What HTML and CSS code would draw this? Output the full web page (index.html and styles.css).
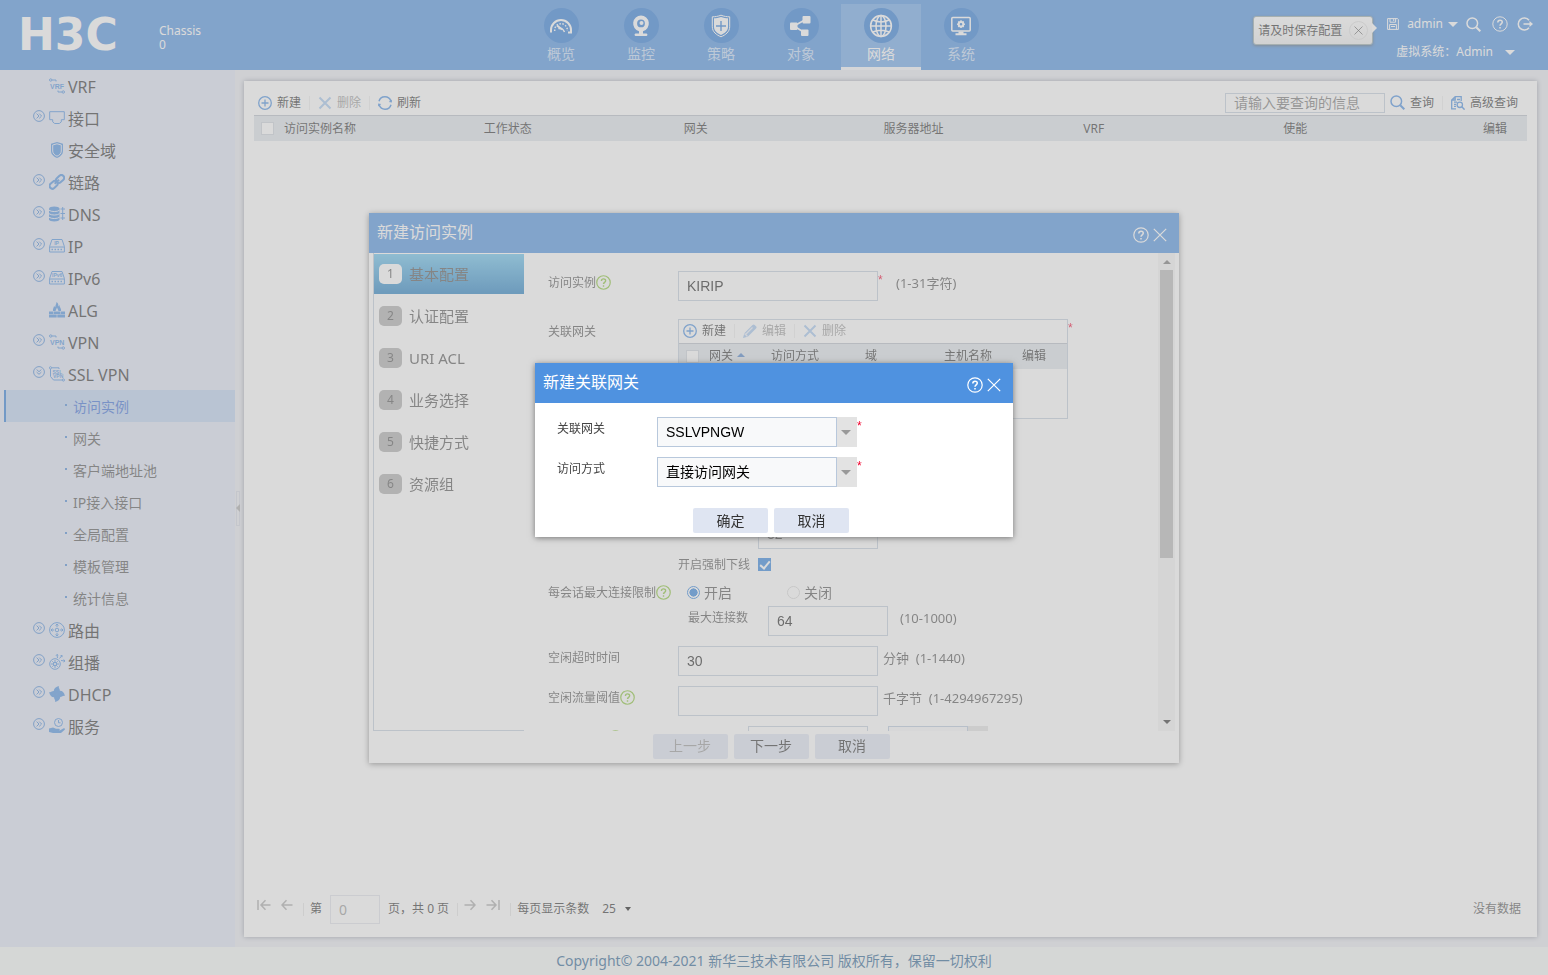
FILE: index.html
```html
<!DOCTYPE html>
<html lang="zh-CN">
<head>
<meta charset="utf-8">
<title>H3C</title>
<link rel="stylesheet" href="styles.css">
</head>
<body>
<svg class="sprite" aria-hidden="true">
  <symbol id="i-more" viewBox="0 0 12 12"><circle cx="6" cy="6" r="5.4"/><path d="M3.6 3.6 6 6 3.6 8.4M6.2 3.6 8.6 6 6.2 8.4"/></symbol>
  <symbol id="i-less" viewBox="0 0 12 12"><circle cx="6" cy="6" r="5.4"/><path d="M3.6 3.5 6 5.7 8.4 3.5M3.6 6.1 6 8.3 8.4 6.1"/></symbol>
  <symbol id="i-vrf" viewBox="0 0 16 16"><path d="M3 2h4v1.500M9 12.500V14h4"/><circle cx="1.7" cy="2" r="1.2"/><circle cx="14.3" cy="14" r="1.2"/><text x="1" y="10.6">VRF</text></symbol>
  <symbol id="i-vpn" viewBox="0 0 16 16"><path d="M3 2h4v1.500M9 12.500V14h4"/><circle cx="1.7" cy="2" r="1.2"/><circle cx="14.3" cy="14" r="1.2"/><text x="1" y="10.6">VPN</text></symbol>
  <symbol id="i-ssl" viewBox="0 0 16 16"><path d="M3 1.800h7v1.200M1.500 3v7.500l3 3.500h8.500"/><circle cx="1.500" cy="1.800" r="1.1"/><circle cx="14.400" cy="14" r="1.1"/><text class="tiny" x="3.500" y="7.500">SSL</text><text class="tiny" x="4" y="12.400">VPN</text></symbol>
  <symbol id="i-port" viewBox="0 0 16 16"><path d="M.7 1.700h14.600v8h-3v2.200l-2 1.600H5.700l-2-1.600V9.700h-3z"/></symbol>
  <symbol id="i-shield" viewBox="0 0 16 16"><path class="solid" d="M8 0 14 1.800V9c0 3.500-3 5.800-6 7-3-1.200-6-3.500-6-7V1.800z"/><path class="cut" d="M8 1.800 12.300 3v6c0 2.500-2 4.200-4.300 5.200C5.700 13.200 3.700 11.500 3.700 9V3z"/></symbol>
  <symbol id="i-link" viewBox="0 0 16 16"><g transform="rotate(-42 8 8)" class="thick"><rect x="-.8" y="5" width="8.800" height="5.600" rx="2.800"/><rect x="8" y="5" width="8.800" height="5.600" rx="2.800"/><path d="M5 7.800h6"/></g></symbol>
  <symbol id="i-dns" viewBox="0 0 16 16"><path class="solid" d="M0 2.500C0-.2 10.500-.2 10.500 2.500v10.800c0 3-10.500 3-10.500 0z"/><path class="cut" d="M0 4.200c2 1.800 8.500 1.800 10.500 0M0 7.700c2 1.800 8.500 1.800 10.500 0M0 11.200c2 1.800 8.500 1.800 10.500 0"/><path d="M11.500 3H16M11.500 7.500H16M11.500 12H16M13.700 1v13"/></symbol>
  <symbol id="i-ip" viewBox="0 0 16 16"><path d="M3 1.500h10l2.400 7v5.500H.6V8.500zM.6 9h14.800"/><path class="dots" d="M2.500 11.500h11"/><text class="tiny" x="5.200" y="7.200">IP</text></symbol>
  <symbol id="i-ip6" viewBox="0 0 16 16"><path d="M3 1.500h10l2.400 7v5.500H.6V8.500zM.6 9h14.800"/><path class="dots" d="M2.500 11.500h11"/><text class="tiny" x="3" y="7.200">IPv6</text></symbol>
  <symbol id="i-alg" viewBox="0 0 16 16"><path class="solid" d="M0 9.500h4.500V12H0zM5 9.500h6V12H5zM11.500 9.500H16V12h-4.500zM0 12.600h7.700v3H0zM8.300 12.600H16v3H8.300zM4 9C3.500 6.500 5 5.500 5 4l1.300 1.200C6.300 3 7.500 2 7.500 0c2 1.300 2 3 1.700 4.500L10.500 3c0 2.500 2.200 3.500 1.500 6H9.500L8 5.500 6.500 9z"/></symbol>
  <symbol id="i-route" viewBox="0 0 16 16"><circle cx="8" cy="8" r="7.400"/><circle cx="8" cy="8" r="1.800"/><path d="M8 2v3M6.600 3.500 8 2l1.400 1.500M8 14v-3M6.600 12.500 8 14l1.400-1.500M2 8h3M3.500 6.600 2 8l1.500 1.400M14 8h-3M12.500 6.600 14 8l-1.500 1.400"/></symbol>
  <symbol id="i-cast" viewBox="0 0 16 16"><circle cx="6" cy="10" r="5.300"/><circle cx="6" cy="10" r="1.600"/><path d="M6 6v2.400M6 11.600V14M2 10h2.400M7.600 10H10M3.300 7.300l1.500 1.500M7.200 11.200l1.500 1.500M8.700 7.300 7.200 8.800M4.800 11.200l-1.500 1.500M8.500 4 8 .5M10.500 4.500 13 1.500M12 6.500l4 .500M7 1.700 8 .5l1.300 1M11.500 1.700 13 1.500v1.700M14.700 5.500 16 7l-1.500 1"/></symbol>
  <symbol id="i-dhcp" viewBox="0 0 16 16"><g class="solid"><path d="M7.800 8C3.500 7 3.500 1.500 10 0c-1 2 1.500 3 .800 5.500C10.300 7.300 9 8 7.800 8z"/><path transform="rotate(90 8 8)" d="M7.800 8C3.500 7 3.500 1.500 10 0c-1 2 1.500 3 .800 5.500C10.300 7.300 9 8 7.800 8z"/><path transform="rotate(180 8 8)" d="M7.800 8C3.500 7 3.500 1.500 10 0c-1 2 1.500 3 .800 5.500C10.300 7.300 9 8 7.800 8z"/><path transform="rotate(270 8 8)" d="M7.800 8C3.500 7 3.500 1.500 10 0c-1 2 1.500 3 .800 5.500C10.300 7.300 9 8 7.800 8z"/></g></symbol>
  <symbol id="i-serve" viewBox="0 0 16 16"><circle cx="9.500" cy="4.500" r="4"/><path d="M9.500 2v2.800h2"/><path class="solid" d="M0 10.500 4 9.500l3 1.300h3c1 .2 1 1.500 0 1.700H7.500h3.200l4-2.300c1-.3 1.700.7 1 1.500L12 15H4l-4-1z"/></symbol>

  <symbol id="i-plus" viewBox="0 0 14 14"><circle cx="7" cy="7" r="6.300"/><path d="M7 3.500v7M3.500 7h7"/></symbol>
  <symbol id="i-del" viewBox="0 0 14 14"><path class="bold" d="M1.500 1.500 12.500 12.500M12.500 1.500 1.500 12.500"/></symbol>
  <symbol id="i-refresh" viewBox="0 0 14 14"><path class="med" d="M1 5.300A6.200 6.200 0 0 1 12.800 5M13 8.700A6.200 6.200 0 0 1 1.200 9"/><path class="solid" d="M13.900 3.500v3l-3.200-.500zM.1 10.500v-3l3.200.500z"/></symbol>
  <symbol id="i-pen" viewBox="0 0 14 14"><path class="solid" d="m0 14 1.300-4.800L9.500 1c.8-.8 1.500-.8 2.200 0L13 2.300c.8.800.8 1.500 0 2.200L4.800 12.700z"/><path class="cut" d="m3 10 6.500-6.500M1.500 9.500l3 3"/></symbol>
  <symbol id="i-search" viewBox="0 0 15 15"><circle class="med" cx="6.300" cy="6.300" r="5.300"/><path class="bold" d="m10.300 10.300 4 4"/></symbol>
  <symbol id="i-adv" viewBox="0 0 14 14"><path d="M5 12.800H.7V4l3.500-3.300h6V5M.7 4h3.500V.7M3 6.200h3M3 8.300h2M3 10.400h2M6 3.500h3"/><circle cx="8.800" cy="8.800" r="2.700"/><path class="med" d="m10.800 10.800 2.800 2.800"/></symbol>
  <symbol id="i-help" viewBox="0 0 16 16"><circle cx="8" cy="8" r="7.200"/><path class="med" d="M5.800 6.400c0-3 4.500-2.900 4.500-.300C10.300 7.800 8 7.900 8 9.700M8 11v1.500"/></symbol>
  <symbol id="i-close" viewBox="0 0 14 14"><path d="M.8.800 13.200 13.200M13.200.8.8 13.200"/></symbol>
  <symbol id="i-save" viewBox="0 0 12 12"><path d="M.6.600h10l.8 1v9.800H.6zM3 .600v3.600h5.600V.600M6.700 1v2M2.600 11.400V6.500h6.800v4.900M4 8.500h4"/></symbol>
  <symbol id="i-exit" viewBox="0 0 16 14"><path class="med" d="M12 3.300A6 6 0 1 0 12 10.700M6.500 7h7"/><path class="solid" d="M12.500 4v6L16 7z"/></symbol>
  <symbol id="i-prev" viewBox="0 0 12 12"><path class="med" d="M11.500 6H1M5.500 1.200 1 6l4.500 4.800"/></symbol>
  <symbol id="i-first" viewBox="0 0 14 12"><path class="med" d="M1 1v10M13.500 6H4M8.500 1.200 4 6l4.500 4.800"/></symbol>

  <symbol id="n-gauge" viewBox="0 0 24 24"><path class="bold" d="M2 18.500V16a10 10 0 0 1 20 0v2.500h-3"/><path class="dots" d="M5.700 17v-1a6.300 6.300 0 0 1 12.600 0v1"/><path class="bold" d="m8 11.500 5 4"/><path class="med" d="M9.500 15c2-1.500 4.500-.500 6 3"/></symbol>
  <symbol id="n-cam" viewBox="0 0 24 24"><path class="solid" fill-rule="evenodd" d="M12 1.500a8 8 0 0 1 2 15.700v2.300h3.500a1.300 1.300 0 0 1 0 2.500h-11a1.300 1.300 0 0 1 0-2.500H10v-2.300A8 8 0 0 1 12 1.500zm0 4a3.900 3.900 0 1 0 0 7.800 3.900 3.900 0 0 0 0-7.800z"/><circle class="solid" cx="12.500" cy="9" r="2"/></symbol>
  <symbol id="n-policy" viewBox="0 0 24 24"><path d="M12 1.200c3 1.200 6 1.600 8.700 1.600v10c0 5-4.200 8.200-8.700 10-4.500-1.800-8.700-5-8.700-10v-10c2.700 0 5.700-.4 8.700-1.600z"/><path class="solid" fill-rule="evenodd" d="M12 3c2.500 1 4.800 1.300 7 1.300v8.500c0 4-3.300 6.500-7 8.200-3.700-1.700-7-4.200-7-8.200V4.300C7.200 4.300 9.500 4 12 3zM11.300 7v4.300H7v1.400h4.300V17h1.400v-4.300H17v-1.400h-4.300V7z"/></symbol>
  <symbol id="n-obj" viewBox="0 0 24 24"><path class="med" d="M5 12 17.500 5M5 12l11 7"/><rect class="solid" x="1" y="8.500" width="7.500" height="7.500" rx="1"/><rect class="solid" x="13.500" y="2" width="8" height="7.500" rx="1"/><rect class="solid" x="12" y="15.500" width="7.500" height="6.500" rx="1"/></symbol>
  <symbol id="n-net" viewBox="0 0 24 24"><g class="med"><circle cx="12" cy="12" r="10.400"/><ellipse cx="12" cy="12" rx="5" ry="10.400"/><path d="M1.600 12h20.800M12 1.600v20.800M4 6c4.500 2.500 11.500 2.500 16 0M4 18c4.500-2.500 11.500-2.500 16 0"/></g></symbol>
  <symbol id="n-sys" viewBox="0 0 24 24"><rect class="med" x="2.800" y="3.500" width="18.400" height="13.500" rx="1"/><path class="solid" d="M9.500 17.500h5v1.800h3v2h-11v-2h3z"/><circle class="bold" cx="12" cy="10.200" r="2.300"/><path class="med" d="M12 6.300v1.500M12 12.600v1.500M8.100 10.200h1.500M14.400 10.200h1.500M9.300 7.500l1 1M13.700 11.900l1 1M14.700 7.500l-1 1M10.300 11.900l-1 1"/></symbol>
</svg>

<header class="topbar">
  <div class="brand">
    <span class="logo">H3C</span>
    <span class="chassis">Chassis<br>0</span>
  </div>
  <nav class="mainnav">
    <a href="#"><span class="disc"><svg><use href="#n-gauge"/></svg></span>概览</a>
    <a href="#"><span class="disc"><svg><use href="#n-cam"/></svg></span>监控</a>
    <a href="#"><span class="disc"><svg><use href="#n-policy"/></svg></span>策略</a>
    <a href="#"><span class="disc"><svg><use href="#n-obj"/></svg></span>对象</a>
    <a href="#" class="current" aria-current="page"><span class="disc"><svg><use href="#n-net"/></svg></span>网络</a>
    <a href="#"><span class="disc"><svg><use href="#n-sys"/></svg></span>系统</a>
  </nav>
  <div class="tools">
    <div class="tools-row">
      <div class="tip">请及时保存配置<button type="button" class="tip-close" aria-label="关闭提示"><svg><use href="#i-close"/></svg></button></div>
      <button type="button" class="plain" aria-label="保存"><svg class="s12"><use href="#i-save"/></svg></button>
      <button type="button" class="plain user">admin<i class="caret"></i></button>
      <button type="button" class="plain" aria-label="搜索"><svg class="s15"><use href="#i-search"/></svg></button>
      <button type="button" class="plain helpbtn" aria-label="帮助"><svg class="s16"><use href="#i-help"/></svg></button>
      <button type="button" class="plain" aria-label="退出"><svg class="s16"><use href="#i-exit"/></svg></button>
    </div>
    <button type="button" class="plain vsys">虚拟系统：Admin<i class="caret"></i></button>
  </div>
</header>

<div class="workspace">
  <aside class="sidebar">
    <ul class="menu">
      <li><a href="#"><svg class="kind"><use href="#i-vrf"/></svg>VRF</a></li>
      <li><a href="#"><svg class="fold"><use href="#i-more"/></svg><svg class="kind"><use href="#i-port"/></svg>接口</a></li>
      <li><a href="#"><svg class="kind"><use href="#i-shield"/></svg>安全域</a></li>
      <li><a href="#"><svg class="fold"><use href="#i-more"/></svg><svg class="kind"><use href="#i-link"/></svg>链路</a></li>
      <li><a href="#"><svg class="fold"><use href="#i-more"/></svg><svg class="kind"><use href="#i-dns"/></svg>DNS</a></li>
      <li><a href="#"><svg class="fold"><use href="#i-more"/></svg><svg class="kind"><use href="#i-ip"/></svg>IP</a></li>
      <li><a href="#"><svg class="fold"><use href="#i-more"/></svg><svg class="kind"><use href="#i-ip6"/></svg>IPv6</a></li>
      <li><a href="#"><svg class="kind"><use href="#i-alg"/></svg>ALG</a></li>
      <li><a href="#"><svg class="fold"><use href="#i-more"/></svg><svg class="kind"><use href="#i-vpn"/></svg>VPN</a></li>
      <li><a href="#"><svg class="fold"><use href="#i-less"/></svg><svg class="kind"><use href="#i-ssl"/></svg>SSL VPN</a>
        <ul class="submenu">
          <li><a href="#" class="current">访问实例</a></li>
          <li><a href="#">网关</a></li>
          <li><a href="#">客户端地址池</a></li>
          <li><a href="#">IP接入接口</a></li>
          <li><a href="#">全局配置</a></li>
          <li><a href="#">模板管理</a></li>
          <li><a href="#">统计信息</a></li>
        </ul>
      </li>
      <li><a href="#"><svg class="fold"><use href="#i-more"/></svg><svg class="kind"><use href="#i-route"/></svg>路由</a></li>
      <li><a href="#"><svg class="fold"><use href="#i-more"/></svg><svg class="kind"><use href="#i-cast"/></svg>组播</a></li>
      <li><a href="#"><svg class="fold"><use href="#i-more"/></svg><svg class="kind"><use href="#i-dhcp"/></svg>DHCP</a></li>
      <li><a href="#"><svg class="fold"><use href="#i-more"/></svg><svg class="kind"><use href="#i-serve"/></svg>服务</a></li>
    </ul>
    <button type="button" class="collapse" aria-label="收起菜单"></button>
  </aside>

  <main class="panel">
    <div class="toolbar">
      <button type="button"><svg><use href="#i-plus"/></svg>新建</button>
      <button type="button" disabled><svg><use href="#i-del"/></svg>删除</button>
      <button type="button"><svg><use href="#i-refresh"/></svg>刷新</button>
      <div class="query">
        <input type="text" placeholder="请输入要查询的信息" aria-label="查询信息">
        <button type="button"><svg class="s15"><use href="#i-search"/></svg>查询</button>
        <button type="button"><svg><use href="#i-adv"/></svg>高级查询</button>
      </div>
    </div>
    <table class="list">
      <thead>
        <tr><th class="tick"><input type="checkbox" aria-label="全选"></th><th>访问实例名称</th><th>工作状态</th><th>网关</th><th>服务器地址</th><th>VRF</th><th>使能</th><th class="edit">编辑</th></tr>
      </thead>
    </table>
    <div class="pager">
      <button type="button" class="arrow" disabled aria-label="首页"><svg class="w14"><use href="#i-first"/></svg></button>
      <button type="button" class="arrow" disabled aria-label="上一页"><svg><use href="#i-prev"/></svg></button>
      <i class="bar"></i>
      <label class="jump">第<input type="text" value="0" disabled></label>
      <span class="count">页，共 0 页</span>
      <i class="bar"></i>
      <button type="button" class="arrow flip" disabled aria-label="下一页"><svg><use href="#i-prev"/></svg></button>
      <button type="button" class="arrow flip" disabled aria-label="末页"><svg class="w14"><use href="#i-first"/></svg></button>
      <i class="bar"></i>
      <label class="size">每页显示条数<select><option>25</option></select><i class="caret"></i></label>
      <span class="empty">没有数据</span>
    </div>
  </main>
</div>

<footer class="copyright">Copyright© 2004-2021 新华三技术有限公司 版权所有，保留一切权利</footer>

<div class="layer">
  <section class="dialog wizard" role="dialog" aria-label="新建访问实例">
    <div class="dialog-head">
      <h2>新建访问实例</h2>
      <button type="button" class="plain" aria-label="帮助"><svg class="s16"><use href="#i-help"/></svg></button>
      <button type="button" class="plain" aria-label="关闭"><svg class="s14"><use href="#i-close"/></svg></button>
    </div>
    <div class="wizard-body">
      <ol class="steps">
        <li class="current"><b>1</b>基本配置</li>
        <li><b>2</b>认证配置</li>
        <li><b>3</b>URI ACL</li>
        <li><b>4</b>业务选择</li>
        <li><b>5</b>快捷方式</li>
        <li><b>6</b>资源组</li>
      </ol>
      <form class="fields">
        <div class="field">
          <label for="name">访问实例<svg class="hint"><use href="#i-help"/></svg></label>
          <input id="name" type="text" value="KIRIP"><em>*</em><span class="note wide">(1-31字符)</span>
        </div>
        <div class="field gateways">
          <span class="caption">关联网关</span>
          <div class="subgrid">
            <div class="toolbar">
              <button type="button"><svg><use href="#i-plus"/></svg>新建</button>
              <button type="button" disabled><svg><use href="#i-pen"/></svg>编辑</button>
              <button type="button" disabled><svg><use href="#i-del"/></svg>删除</button>
            </div>
            <table class="list">
              <thead>
                <tr><th class="tick"><input type="checkbox" aria-label="全选网关"></th><th class="gw">网关<i class="sort"></i></th><th class="mode">访问方式</th><th>域</th><th class="host">主机名称</th><th class="edit">编辑</th></tr>
              </thead>
            </table>
          </div><em>*</em>
        </div>
        <div class="field online">
          <input class="short inset" type="text" value="32" aria-label="最大在线数">
        </div>
        <div class="field force">
          <label class="inner" for="force">开启强制下线</label>
          <input id="force" type="checkbox" checked>
        </div>
        <div class="field switch">
          <span class="caption">每会话最大连接限制<svg class="hint"><use href="#i-help"/></svg></span>
          <label class="choice"><input type="radio" name="limit" checked>开启</label>
          <label class="choice"><input type="radio" name="limit">关闭</label>
        </div>
        <div class="field conn">
          <label class="inner" for="conn">最大连接数</label>
          <input id="conn" class="short" type="text" value="64"><span class="note mid">(10-1000)</span>
        </div>
        <div class="field">
          <label for="idle">空闲超时时间</label>
          <input id="idle" type="text" value="30"><span class="note">分钟 &nbsp;(1-1440)</span>
        </div>
        <div class="field">
          <label for="flow">空闲流量阈值<svg class="hint"><use href="#i-help"/></svg></label>
          <input id="flow" type="text"><span class="note">千字节 &nbsp;(1-4294967295)</span>
        </div>
        <div class="field rate">
          <label for="rate">每会话限速<svg class="hint"><use href="#i-help"/></svg></label>
          <input id="rate" class="short" type="text">
          <span class="picker"><select aria-label="限速单位"><option></option></select></span>
        </div>
      </form>
      <div class="track" aria-hidden="true"><i class="up"></i><i class="thumb"></i><i class="down"></i></div>
    </div>
    <div class="actions">
      <button type="button" disabled>上一步</button>
      <button type="button">下一步</button>
      <button type="button">取消</button>
    </div>
  </section>
</div>

<div class="layer shade">
  <section class="dialog gateway" role="dialog" aria-modal="true" aria-label="新建关联网关">
    <div class="dialog-head">
      <h2>新建关联网关</h2>
      <button type="button" class="plain" aria-label="帮助"><svg class="s16"><use href="#i-help"/></svg></button>
      <button type="button" class="plain" aria-label="关闭"><svg class="s14"><use href="#i-close"/></svg></button>
    </div>
    <form class="pair">
      <div class="field">
        <label for="gw">关联网关</label>
        <span class="picker"><select id="gw"><option>SSLVPNGW</option></select></span><em>*</em>
      </div>
      <div class="field">
        <label for="mode">访问方式</label>
        <span class="picker"><select id="mode"><option>直接访问网关</option></select></span><em>*</em>
      </div>
    </form>
    <div class="actions">
      <button type="button">确定</button>
      <button type="button">取消</button>
    </div>
  </section>
</div>
</body>
</html>
```
FILE: styles.css
```css
:root {
  --blue: #4f92e0;
  --line: #c3cedc;
  --ui: "Noto Sans", "Noto Sans CJK SC", sans-serif;
  --entry: "Liberation Sans", "Noto Sans CJK SC", sans-serif;
}
* { box-sizing: border-box; }
body {
  margin: 0;
  min-height: 100vh;
  display: flex;
  flex-direction: column;
  background: #e9ebf1;
  color: #333;
  font: 12px/20px var(--ui);
}
ul, ol, h2, form { margin: 0; padding: 0; list-style: none; }
a { color: inherit; text-decoration: none; }
em { color: #f0002c; font: 12px/18px var(--entry); }
button, input, select { font: inherit; color: inherit; }
button { border: 0; padding: 0; background: none; }
svg { fill: none; stroke: currentColor; stroke-width: 1; flex: none; }
symbol text { fill: currentColor; stroke: none; font: bold 7px/1 "Liberation Sans", sans-serif; }
symbol .tiny { font-size: 5px; }
.sprite { display: none; }
.solid { fill: currentColor; stroke: none; }
.cut { fill: none; stroke: #dfe5f5; }
.med { stroke-width: 1.5; }
.bold { stroke-width: 2; }
.thick { stroke-width: 2; }
.dots { stroke-dasharray: 1.5 1.5; stroke-width: 1.5; }
.s12 { width: 12px; height: 12px; }
.s14 { width: 14px; height: 14px; }
.s15 { width: 15px; height: 15px; }
.s16 { width: 16px; height: 16px; }
.plain { display: flex; align-items: center; }
.caret { border: 5px solid transparent; border-top-color: currentColor; border-bottom: 0; }

/* top bar */
.topbar {
  display: grid;
  grid-template-columns: minmax(0, 521fr) 480px minmax(0, 547fr);
  height: 70px;
  background: var(--blue);
  color: #fff;
}
.brand { display: flex; align-items: center; gap: 22px; padding-left: 18px; }
.logo { width: 119px; font: bold 44px/44px "DejaVu Sans", sans-serif; }
.chassis { line-height: 14px; padding-top: 6px; }
.mainnav { display: grid; grid-template-columns: repeat(6, 1fr); padding-top: 4px; }
.mainnav a {
  display: flex;
  flex-direction: column;
  align-items: center;
  gap: 1px;
  padding-top: 4px;
  border-bottom: 3px solid transparent;
  color: #c4dcf8;
  font-size: 14px;
  line-height: 20px;
}
.mainnav .current { background: #6da6e8; border-color: #f4f6fb; color: #fff; }
.disc { display: grid; place-items: center; width: 35px; height: 35px; border-radius: 50%; background: #2f7cd6; color: #fff; }
.disc svg { width: 24px; height: 24px; }
.tools { display: flex; flex-direction: column; align-items: flex-end; gap: 8px; padding: 14px 15px 0 0; }
.tools-row { display: flex; align-items: center; gap: 8px; }
.tools .plain { height: 20px; }
.user { gap: 5px; }
.tools .helpbtn { margin: 0 1px 0 3px; }
.vsys { gap: 12px; margin-right: 18px; }
.tip {
  position: relative;
  display: flex;
  align-items: center;
  gap: 7px;
  height: 29px;
  margin: 2px 6px -11px 0;
  padding: 0 4px;
  border: 1px solid #9aa;
  border-radius: 3px;
  background: linear-gradient(#fff, #eee);
  box-shadow: 0 1px 3px #567;
  color: #333;
}
.tip::after { content: ""; position: absolute; left: 100%; top: 6px; border: 5px solid transparent; border-left-color: #fff; border-right: 0; }
.tip-close { display: grid; place-items: center; width: 19px; height: 19px; border: 1px solid #e0e0e0; border-radius: 50%; }
.tip-close svg { width: 9px; height: 9px; }

/* side menu */
.workspace { flex: 1; display: flex; }
.sidebar { position: relative; width: 235px; flex: none; padding-left: 4px; background: #dfe5f5; }
.menu a { display: flex; align-items: center; height: 32px; padding: 2px 0 0 29px; font-size: 16px; }
.menu .fold { width: 12px; height: 12px; margin: 0 4px 6px 0; color: #4d8bd6; }
.menu .kind { width: 16px; height: 16px; margin: 0 3px 3px 0; color: #4f92e0; }
.menu .kind:first-child { margin-left: 16px; }
.menu .submenu a { padding-left: 69px; position: relative; color: #555; font-size: 14px; }
.submenu a::before { content: ""; position: absolute; left: 61px; top: 14px; width: 2px; height: 2px; background: #4d8bd6; }
.menu .submenu .current { background: #bcd3f1; color: #3d6fd6; box-shadow: inset 2px 0 #2f7cd6; }
.collapse { position: absolute; left: 236px; top: 421px; width: 4px; height: 35px; border: 1px solid #d2d6e2; }
.collapse::after { content: ""; position: absolute; left: -1px; top: 12px; border: 4px solid transparent; border-right-color: #aaa; border-left: 0; }

/* list panel */
.panel {
  flex: 1;
  min-width: 0;
  display: flex;
  flex-direction: column;
  margin: 11px 11px 10px 9px;
  padding: 9px 10px 0;
  background: #fff;
  box-shadow: 0 0 5px #8a8f9c;
}
.toolbar { display: flex; align-items: center; height: 25px; padding-left: 4px; }
.toolbar button { display: flex; align-items: center; gap: 5px; }
.toolbar button + button { margin-left: 8px; padding-left: 8px; border-left: 1px solid #ececec; line-height: 14px; }
.toolbar svg { color: #4a8fe0; width: 14px; height: 14px; stroke-width: 1.3; }
.toolbar .s15 { width: 15px; height: 15px; }
.toolbar button:disabled { color: #999; }
.toolbar button:disabled svg { opacity: .5; }
.toolbar .cut { stroke: #fff; }
.query { display: flex; align-items: center; margin-left: auto; padding-right: 9px; }
.query input { width: 160px; height: 20px; margin-right: 5px; padding: 0 8px; border: 1px solid var(--line); background: #fff; font-size: 14px; }
.query input::placeholder { color: #777; opacity: 1; }
.list { width: 100%; table-layout: fixed; border-collapse: collapse; border-top: 1px solid #b8bfc8; background: #dfe5ea; }
.list th { height: 25px; padding: 2px 0 0 4px; font-weight: 400; text-align: left; }
.list .tick { width: 26px; padding: 0; }
.list .edit { width: 48px; }
input[type="checkbox"] { appearance: none; display: block; width: 13px; height: 13px; margin: 0; border: 1px solid #cdd3da; background: #fff; }
.list .tick input { margin-left: 7px; }
.pager { display: flex; align-items: center; margin-top: auto; height: 58px; padding: 2px 6px 0 3px; }
.arrow { display: flex; margin: 0 10px 8px 0; color: #aaa; }
.arrow svg { width: 12px; height: 12px; }
.arrow .w14 { width: 14px; }
.flip svg { transform: scaleX(-1); }
.bar { width: 1px; height: 13px; background: #e4e4e4; }
.bar + .arrow { margin-left: 6px; }
.arrow + .bar { margin-right: 6px; }
.jump { display: flex; align-items: center; gap: 8px; }
.jump input { width: 50px; height: 29px; padding: 0 8px; border: 1px solid #e0e3ea; background: #fff; color: #999; font: 14px var(--ui); }
.count { margin: 0 8px; }
.size { display: flex; align-items: center; }
.size select { appearance: none; width: 23px; margin-left: 13px; border: 0; padding: 0; background: none; }
.size .caret { border-width: 4px 3px 0; color: #111; }
.empty { margin-left: auto; color: #555; }

.copyright { height: 28px; background: #f4f9f7; color: #2d6493; font-size: 14px; line-height: 28px; text-align: center; }

/* dialogs */
.layer { position: fixed; inset: 0; display: flex; align-items: center; justify-content: center; }
.shade { padding-bottom: 75px; background: rgba(181, 181, 181, .5); }
.dialog { display: flex; flex-direction: column; background: #fff; box-shadow: 0 1px 6px #777; }
.dialog-head { display: flex; align-items: center; gap: 4px; height: 40px; padding: 0 12px 0 8px; background: var(--blue); color: #fff; }
.dialog-head h2 { flex: 1; padding-bottom: 2px; font-size: 16px; font-weight: 400; }
.dialog-head .plain { padding-top: 4px; }
.dialog-head svg { stroke-width: 1.2; }
.actions { display: flex; justify-content: center; gap: 6px; padding: 3px 6px 4px 0; }
.actions button { width: 75px; height: 25px; border-radius: 2px; background: #dfe5f2; font-size: 14px; line-height: 20px; }
.actions button:disabled { color: #999; }
.field { display: flex; align-items: flex-start; color: #555; }
.field label, .caption { display: flex; align-items: center; width: 130px; height: 24px; flex: none; }
.field input[type="text"] { width: 200px; height: 30px; padding: 0 8px; border: 1px solid var(--line); background: #fff; color: #222; font: 14px var(--entry); }
.field em { width: 7px; }
.hint { width: 15px; height: 15px; color: #8cc63c; stroke-width: 1.3; }
.picker { position: relative; display: flex; width: 200px; height: 30px; }
.picker select { appearance: none; width: 100%; padding: 0 28px 0 8px; border: 1px solid #b8c8dc; border-radius: 0; background: #f8f9fa; color: #000; font: 14px var(--entry); }
.picker::before { content: ""; position: absolute; right: 0; top: 0; width: 20px; height: 30px; border-left: 1px solid #b8c8dc; background: #e3e3e3; pointer-events: none; }
.picker::after { content: ""; position: absolute; right: 6px; top: 13px; border: 5px solid transparent; border-top-color: #999; border-bottom: 0; pointer-events: none; }

.wizard { width: 810px; max-width: 100%; height: 550px; }
.wizard-body { flex: 1; min-height: 0; display: flex; padding: 0 4px; }
.steps { width: 151px; flex: none; border-left: 1px solid var(--line); border-bottom: 1px solid var(--line); padding-top: 1px; }
.steps li { display: flex; align-items: center; gap: 7px; height: 40px; margin-bottom: 2px; padding-left: 5px; color: #555; font-size: 15px; }
.steps b { width: 23px; height: 20px; border-radius: 5px; background: #aeaeae; font-size: 12px; font-weight: 400; text-align: center; }
.steps .current { background: linear-gradient(#69c3ed, #257fc1); }
.steps .current b { background: #fff; }
.fields { flex: 1; min-width: 0; overflow: hidden; padding: 18px 0 0 24px; }
.fields .field + .field { margin-top: 10px; }
.fields .gateways.gateways { margin-top: 18px; }
.gateways .caption { height: 27px; }
.note { padding: 2px 0 0 5px; font-size: 13px; }
.wide { padding-left: 11px; }
.mid { padding-left: 12px; }
.fields .short.short { width: 120px; }
.inset { margin-left: 210px; }
.subgrid { width: 390px; height: 100px; border: 1px solid var(--line); color: #333; }
.subgrid .toolbar { height: 23px; }
.subgrid .list th { height: 26px; padding-top: 0; }
.subgrid .tick { width: 26px; }
.subgrid .gw { width: 62px; }
.subgrid .mode { width: 94px; }
.subgrid .host { width: 78px; }
.subgrid .edit { width: 49px; }
.sort { display: inline-block; margin: 0 0 3px 4px; border: 4px solid transparent; border-bottom-color: #4f82c8; border-top: 0; }
.fields .online.online { margin-top: 100px; }
.fields .force.force { margin-top: 4px; align-items: center; padding-left: 130px; }
.force .inner.inner { width: 80px; }
input[type="checkbox"]:checked { position: relative; border-color: #3182dc; background: #3182dc; }
input[type="checkbox"]:checked::after { content: ""; position: absolute; left: 3px; top: 0; width: 4px; height: 8px; border: solid #fff; border-width: 0 2px 2px 0; transform: rotate(40deg); }
.fields .switch.switch { margin-top: 4px; align-items: center; }
.switch .caption { width: 139px; }
.switch .choice { width: 100px; gap: 4px; font-size: 14px; }
.choice input { appearance: none; width: 13px; height: 13px; margin: 0; border: 1px solid #d8d8d8; border-radius: 50%; }
.choice input:checked { border-color: #3182dc; background: radial-gradient(#3182dc 50%, #fff 55%); }
.fields .conn.conn { margin-top: 1px; padding-left: 140px; }
.conn .inner.inner { width: 80px; }
.rate .short { margin-left: 70px; }
.rate .picker { width: 100px; margin-left: 20px; }
.track { display: flex; flex-direction: column; align-items: center; width: 17px; padding: 7px 0; background: #f5f5f5; }
.track .up { border: 4px solid transparent; border-bottom-color: #777; border-top: 0; margin-bottom: 6px; }
.track .thumb { width: 13px; height: 288px; background: #b9b9b9; }
.track .down { border: 4px solid transparent; border-top-color: #333; border-bottom: 0; margin-top: auto; }

.gateway { width: 478px; max-width: 100%; }
.pair { display: grid; gap: 10px; padding: 14px 22px 18px; }
.pair .field label { width: 100px; color: #444; }
```
